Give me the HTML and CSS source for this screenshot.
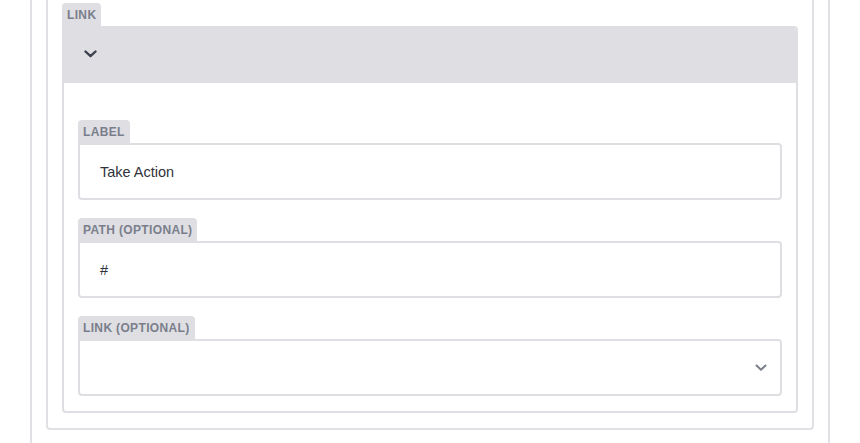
FILE: index.html
```html
<!DOCTYPE html>
<html>
<head>
<meta charset="utf-8">
<link rel="stylesheet" href="styles.css">
</head>
<body>
<div class="outer">
  <div class="panel">
    <div class="group">
      <div class="tab">LINK</div>
      <div class="card">
        <div class="card-head">
          <svg class="chev" width="13" height="8" viewBox="0 0 13 8"><polyline points="1.5,1.5 6.5,6.2 11.5,1.5" fill="none" stroke="#3d424e" stroke-width="2.4" stroke-linecap="round" stroke-linejoin="round"/></svg>
        </div>
        <div class="card-body">
          <div class="field">
            <div class="tab">LABEL</div>
            <div class="input">Take Action</div>
          </div>
          <div class="field">
            <div class="tab">PATH (OPTIONAL)</div>
            <div class="input">#</div>
          </div>
          <div class="field">
            <div class="tab">LINK (OPTIONAL)</div>
            <div class="input select">
              <svg width="12" height="8" viewBox="0 0 12 8"><polyline points="1.5,1.5 6,5.8 10.5,1.5" fill="none" stroke="#7a7f8b" stroke-width="2" stroke-linecap="round" stroke-linejoin="round"/></svg>
            </div>
          </div>
        </div>
      </div>
    </div>
  </div>
</div>
</body>
</html>
```
FILE: styles.css
```css
html, body {
  margin: 0;
  padding: 0;
  background: #ffffff;
  font-family: "Liberation Sans", Arial, sans-serif;
}
.outer {
  margin-left: 30px;
  width: 800px;
  box-sizing: border-box;
  border-left: 2px solid #e0e0e5;
  border-right: 2px solid #e0e0e5;
  padding: 0 14px 20px;
  min-height: 443px;
}
.panel {
  border: 2px solid #e0e0e5;
  border-top: none;
  border-radius: 0 0 4px 4px;
  padding: 3px 14px 15px;
}
.tab {
  display: inline-block;
  height: 23px;
  line-height: 24px;
  padding: 0 5px;
  background: #dedee3;
  border-radius: 4px 4px 0 0;
  font-size: 12px;
  font-weight: bold;
  color: #7a7e8b;
  letter-spacing: 0.35px;
  vertical-align: top;
}
.group {
  display: flex;
  flex-direction: column;
  align-items: flex-start;
}
.card {
  align-self: stretch;
  border: 2px solid #dedee3;
  border-radius: 0 4px 4px 4px;
  overflow: hidden;
}
.card-head {
  height: 55px;
  background: #dedee3;
  display: flex;
  align-items: center;
  padding-left: 20px;
}
.card-head .chev {
  display: block;
  margin-top: -3px;
}
.card-body {
  padding: 37px 14px 15px;
  display: flex;
  flex-direction: column;
  gap: 18px;
}
.field {
  display: flex;
  flex-direction: column;
  align-items: flex-start;
}
.input {
  align-self: stretch;
  box-sizing: border-box;
  height: 57px;
  border: 2px solid #dedee3;
  border-radius: 0 4px 4px 4px;
  padding: 0 20px;
  display: flex;
  align-items: center;
  font-size: 14.5px;
  color: #2f323a;
}
.select {
  justify-content: flex-end;
  padding-right: 13px;
}
.select svg {
  display: block;
}
```
